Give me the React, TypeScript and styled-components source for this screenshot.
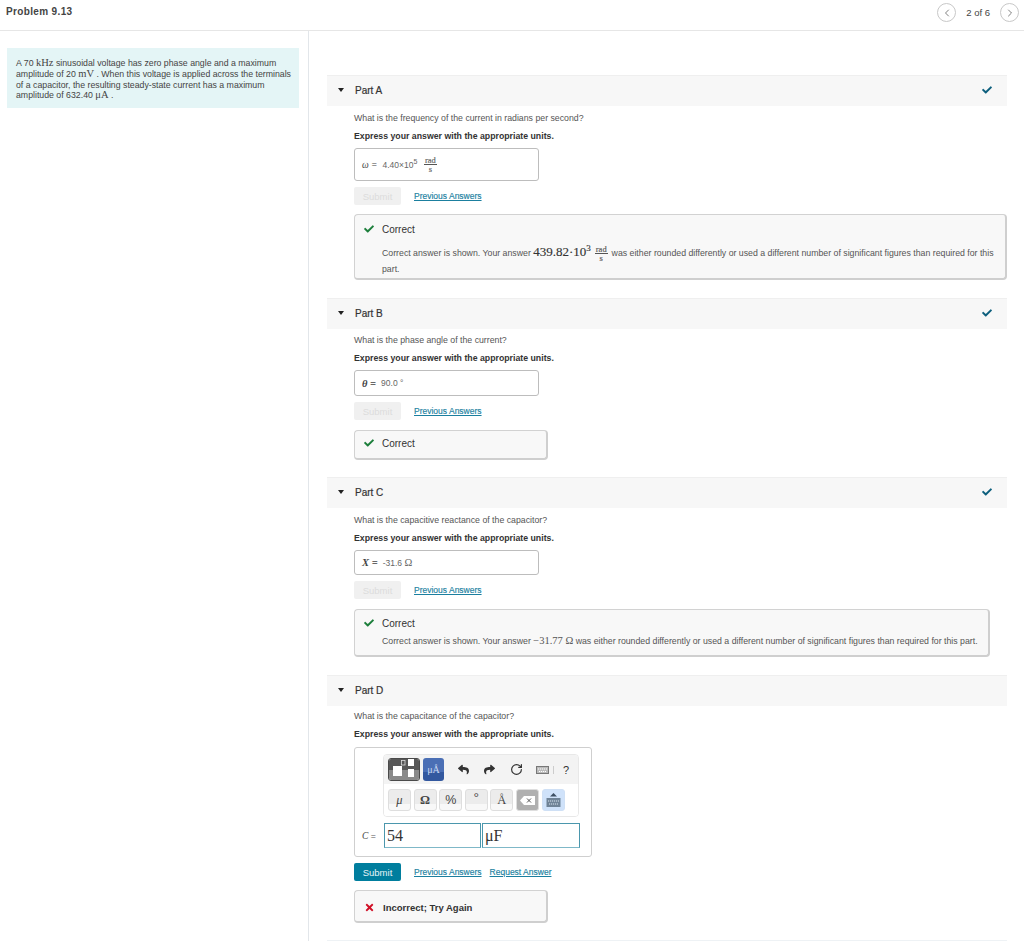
import React from 'react'
import styled, { createGlobalStyle } from 'styled-components'
import { FaCheck, FaTimes, FaReply, FaShare } from 'react-icons/fa'
import { ChevronLeft, ChevronRight, RotateCw } from 'lucide-react'

const Global = createGlobalStyle`
  html, body { margin: 0; padding: 0; background: #fff; }
  body { font-family: "Liberation Sans", Arial, sans-serif; font-size: 8.75px; color: #333; }
  * { box-sizing: border-box; }
`

const Page = styled.div`
  width: 1024px;
  height: 941px;
  overflow: hidden;
  display: flex;
  flex-direction: column;
`
const TopBar = styled.header`
  height: 31px;
  flex: none;
  display: flex;
  align-items: center;
  justify-content: space-between;
  padding: 0 5px 7px 6px;
  border-bottom: 1px solid #e6e6e6;
`
const Title = styled.h1`
  margin: 0;
  font-size: 10px;
  line-height: 12px;
  font-weight: bold;
  letter-spacing: 0.35px;
  color: #444;
`
const Pager = styled.div`
  display: flex;
  align-items: center;
  gap: 10px;
  font-size: 9.5px;
  color: #444;
  margin-top: 2px;
`
const CircleButton = styled.span`
  width: 19px;
  height: 19px;
  border-radius: 50%;
  border: 1px solid #c8c8c8;
  display: flex;
  align-items: center;
  justify-content: center;
  color: #555;
`
const Columns = styled.div`
  flex: 1;
  display: grid;
  grid-template-columns: 309px 1fr;
`
const Sidebar = styled.aside`
  border-right: 1px solid #e2e6ea;
  padding: 17px 9px 0 7px;
`
const InfoBox = styled.div`
  height: 60px;
  background: #e4f5f6;
  padding: 10px 6px 0 9px;
  font-size: 8.75px;
  line-height: 10.8px;
  color: #444;
`
const MathText = styled.span`
  font-family: "Liberation Serif", serif;
  font-size: 10.5px;
  line-height: 0;
`
const MathBig = styled(MathText)`
  font-size: 13px;
  color: #333;
  -webkit-text-stroke: 0.15px #333;
`
const Content = styled.main`
  position: relative;
  padding: 44px 18px 0 18px;
  &::after {
    content: '';
    position: absolute;
    right: 0;
    top: 26px;
    bottom: 0;
    width: 1px;
    background: #e3e9ee;
  }
`
const PartBlock = styled.section<{ $after: number }>`
  margin-bottom: ${p => p.$after}px;
`
const LastPart = styled.section`
  padding-bottom: 17px;
  border-bottom: 1px solid #eef2f5;
`
const PartHeader = styled.div`
  height: 31px;
  background: #f7f7f7;
  border-top: 1px solid #efefef;
  display: flex;
  align-items: center;
  padding: 0 15px 2px 11px;
  color: #333;
  font-size: 10px;
  -webkit-text-stroke: 0.2px #333;
`
const Caret = styled.span`
  width: 0;
  height: 0;
  border-left: 3px solid transparent;
  border-right: 3px solid transparent;
  border-top: 4px solid #222;
  margin-right: 11px;
`
const PartName = styled.span`
  flex: 1;
`
const PartBody = styled.div`
  padding-left: 27px;
`
const Question = styled.p<{ $top: number }>`
  margin: ${p => p.$top}px 0 0;
  line-height: 12px;
  color: #555;
`
const Instruction = styled.p`
  margin: 6px 0 0;
  line-height: 12px;
  font-weight: bold;
  color: #333;
`
const AnswerBox = styled.div<{ $h: number }>`
  width: 185px;
  height: ${p => p.$h}px;
  margin-top: 6px;
  border: 1px solid #bdbdbd;
  border-radius: 3px;
  display: flex;
  align-items: center;
  gap: 5px;
  padding-left: 7px;
  font-size: 8.5px;
  color: #666;
`
const Variable = styled.i<{ $strong?: boolean }>`
  font-family: "Liberation Serif", serif;
  font-size: ${p => (p.$strong ? 10.5 : 9.5)}px;
  font-weight: ${p => (p.$strong ? 'bold' : 'normal')};
  color: #444;
`
const Sup = styled.sup`
  font-size: 7px;
  line-height: 0;
`
const BigSup = styled.sup`
  font-size: 9px;
  line-height: 0;
`
const Fraction = styled.span`
  display: inline-flex;
  flex-direction: column;
  align-items: center;
  font-family: "Liberation Serif", serif;
  font-size: 8.5px;
  line-height: 8px;
  vertical-align: middle;
  margin: 0 1.5px;
  -webkit-text-stroke: 0.15px #555;
`
const FractionTop = styled.span`
  border-bottom: 1px solid #555;
  padding: 0 1px;
`
const ActionRow = styled.div`
  display: flex;
  align-items: center;
  gap: 13px;
  margin-top: 6px;
`
const SubmitButton = styled.span<{ $active?: boolean }>`
  width: 47px;
  height: 18px;
  border-radius: 2px;
  display: flex;
  align-items: center;
  justify-content: center;
  font-size: 9.5px;
  background: ${p => (p.$active ? '#007e9e' : '#f0f0f0')};
  color: ${p => (p.$active ? '#e8f4f7' : '#dcdcdc')};
`
const LinkRow = styled.span`
  display: flex;
  gap: 8px;
`
const TextLink = styled.a`
  font-size: 8.5px;
  color: #1b7f9f;
  text-decoration: underline;
  -webkit-text-stroke: 0.15px #1b7f9f;
`
const Feedback = styled.div<{ $w: number; $h: number; $top: number; $pad: number }>`
  width: ${p => p.$w}px;
  height: ${p => p.$h}px;
  margin-top: ${p => p.$top}px;
  padding: ${p => p.$pad}px 8px 0 9px;
  background: #f8f8f8;
  border: 1px solid #d2d2d2;
  border-bottom: 2px solid #cfcfcf;
  border-right: 2px solid #cfcfcf;
  border-radius: 4px;
`
const FeedbackTitle = styled.div`
  display: flex;
  align-items: center;
  gap: 8px;
  height: 12px;
  font-size: 10px;
  color: #333;
`
const WrongLabel = styled.b`
  font-size: 9.5px;
`
const FeedbackText = styled.p<{ $top: number }>`
  margin: ${p => p.$top}px 0 0 18px;
  font-size: 8.75px;
  line-height: 14px;
  color: #555;
`
const Editor = styled.div`
  width: 238px;
  height: 110px;
  margin-top: 7px;
  border: 1px solid #cfcfcf;
  border-radius: 3px;
  padding: 6px 0 0 7px;
`
const Toolbar = styled.div`
  width: 196px;
  height: 63px;
  margin-left: 21px;
  border: 1px solid #e8e8e8;
  border-radius: 4px;
  overflow: hidden;
`
const ToolRowTop = styled.div`
  height: 29px;
  display: flex;
  align-items: center;
  padding-left: 4px;
  background: #f3f3f3;
`
const ToolRowBottom = styled.div`
  height: 32px;
  display: flex;
  align-items: center;
  gap: 2.6px;
  padding-left: 4px;
  background: #fff;
`
const TemplateKey = styled.span`
  width: 32px;
  height: 23px;
  flex: none;
  border-radius: 3px;
  overflow: hidden;
  display: flex;
  border: 1px solid #4a4a4a;
`
const UnitsKey = styled.span`
  width: 21px;
  height: 23px;
  flex: none;
  margin-left: 3px;
  border-radius: 3px;
  background: linear-gradient(#4b6fb5 60%, #33589f 60%);
  color: #c9d8f2;
  font-family: "Liberation Serif", serif;
  font-size: 10px;
  display: flex;
  align-items: center;
  justify-content: center;
`
const IconSlot = styled.span<{ $w: number }>`
  width: ${p => p.$w}px;
  flex: none;
  display: flex;
  align-items: center;
  justify-content: center;
  color: #333;
  font-size: 11px;
`
const SymbolKey = styled.span<{ $kind?: 'dark' | 'blue'; $sans?: boolean; $raise?: boolean }>`
  width: 23px;
  height: 22px;
  border-radius: 3px;
  border: 1px solid ${p => (p.$kind === 'blue' ? '#cfe0f5' : '#dedede')};
  background: ${p =>
    p.$kind === 'dark'
      ? '#b0b0b0'
      : p.$kind === 'blue'
        ? '#cfe2fa'
        : 'linear-gradient(#ececec 72%, #f8f8f8 72%)'};
  display: flex;
  align-items: ${p => (p.$raise ? 'flex-start' : 'center')};
  justify-content: center;
  font-family: ${p => (p.$sans ? '"Liberation Sans", sans-serif' : '"Liberation Serif", serif')};
  font-size: 12.5px;
  color: #444;
`
const EquationRow = styled.div`
  display: flex;
  align-items: center;
  margin-top: 6px;
`
const EquationLabel = styled.span`
  width: 22px;
  color: #555;
`
const MathField = styled.span<{ $w: number }>`
  height: 25px;
  width: ${p => p.$w}px;
  margin-right: 1px;
  border: 1px solid #4b97ad;
  border-bottom-color: #7fb8c8;
  padding-left: 2px;
  font-family: "Liberation Serif", serif;
  font-size: 16px;
  line-height: 23px;
  color: #333;
`
const Green = styled.span`
  display: flex;
  color: #1d7f3c;
  font-size: 10px;
`
const Red = styled.span`
  display: flex;
  color: #d01027;
  font-size: 11px;
`
const HeaderCheck = styled.span`
  display: flex;
  color: #0d5f7d;
  font-size: 10px;
`
const Divider = styled.span`
  width: 1px;
  height: 8px;
  background: #ccc;
  margin-left: 4px;
`

const PartTop = ({ name, done = true }: { name: string; done?: boolean }) => (
  <PartHeader>
    <Caret />
    <PartName>{name}</PartName>
    {done && <HeaderCheck><FaCheck /></HeaderCheck>}
  </PartHeader>
)

const Actions = () => (
  <ActionRow>
    <SubmitButton>Submit</SubmitButton>
    <TextLink>Previous Answers</TextLink>
  </ActionRow>
)

const Correct = () => (
  <FeedbackTitle>
    <Green><FaCheck /></Green>
    Correct
  </FeedbackTitle>
)

const RadPerSec = () => (
  <Fraction><FractionTop>rad</FractionTop>s</Fraction>
)

const TemplateIcon = () => (
  <svg width="30" height="21" viewBox="0 0 30 21">
    <rect width="30" height="11" fill="#585858" />
    <rect y="11" width="30" height="10" fill="#8a8a8a" />
    <rect x="4" y="7" width="9" height="10" fill="#fff" />
    <rect x="12.5" y="1.5" width="3.5" height="4.5" fill="none" stroke="#ddd" strokeWidth="0.8" />
    <rect x="19" y="0" width="6" height="7" fill="#fff" />
    <rect x="19" y="10" width="6" height="8" fill="#fff" />
  </svg>
)

const KeyboardIcon = () => (
  <svg width="13" height="8" viewBox="0 0 13 8">
    <rect x="0.5" y="0.5" width="12" height="7" fill="#bbb" stroke="#777" />
    <path d="M2 3h9M3 5.5h7" stroke="#fff" strokeWidth="1" strokeDasharray="1.2 0.8" />
  </svg>
)

const BackspaceIcon = () => (
  <svg width="15" height="9" viewBox="0 0 15 9">
    <path d="M4 0h11v9H4L0 4.5z" fill="#fff" />
    <path d="M7 2.5l4 4M11 2.5l-4 4" stroke="#555" strokeWidth="1" />
  </svg>
)

const KeyboardToggleIcon = () => (
  <svg width="15" height="15" viewBox="0 0 15 15">
    <path d="M7.5 0l3.5 3.5H4z" fill="#3d4f63" />
    <rect x="0.5" y="5" width="14" height="9" fill="#6f8397" />
    <path d="M2 8h11M3 11h9" stroke="#dbe6f2" strokeWidth="1" strokeDasharray="1.2 0.8" />
  </svg>
)

export default function App() {
  return (
    <Page>
      <Global />
      <TopBar>
        <Title>Problem 9.13</Title>
        <Pager>
          <CircleButton><ChevronLeft size={12} strokeWidth={1.5} /></CircleButton>
          2 of 6
          <CircleButton><ChevronRight size={12} strokeWidth={1.5} /></CircleButton>
        </Pager>
      </TopBar>
      <Columns>
        <Sidebar>
          <InfoBox>
            A 70 <MathText>kHz</MathText> sinusoidal voltage has zero phase angle and a maximum
            amplitude of 20 <MathText>mV</MathText> . When this voltage is applied across the terminals
            of a capacitor, the resulting steady-state current has a maximum
            amplitude of 632.40 <MathText>μA</MathText> .
          </InfoBox>
        </Sidebar>
        <Content>
          <PartBlock $after={18}>
            <PartTop name="Part A" />
            <PartBody>
              <Question $top={6}>What is the frequency of the current in radians per second?</Question>
              <Instruction>Express your answer with the appropriate units.</Instruction>
              <AnswerBox $h={33}>
                <Variable>ω =</Variable>
                <span>4.40×10<Sup>5</Sup></span>
                <RadPerSec />
              </AnswerBox>
              <Actions />
              <Feedback $w={653} $h={66} $top={9} $pad={8}>
                <Correct />
                <FeedbackText $top={10}>
                  Correct answer is shown. Your answer <MathBig>439.82·10<BigSup>3</BigSup></MathBig>{' '}
                  <RadPerSec /> was either rounded differently or used a
                  different number of significant figures than required for this part.
                </FeedbackText>
              </Feedback>
            </PartBody>
          </PartBlock>
          <PartBlock $after={17}>
            <PartTop name="Part B" />
            <PartBody>
              <Question $top={5}>What is the phase angle of the current?</Question>
              <Instruction>Express your answer with the appropriate units.</Instruction>
              <AnswerBox $h={26}>
                <Variable $strong>θ =</Variable> 90.0 °
              </AnswerBox>
              <Actions />
              <Feedback $w={194} $h={30} $top={10} $pad={6}>
                <Correct />
              </Feedback>
            </PartBody>
          </PartBlock>
          <PartBlock $after={18}>
            <PartTop name="Part C" />
            <PartBody>
              <Question $top={6}>What is the capacitive reactance of the capacitor?</Question>
              <Instruction>Express your answer with the appropriate units.</Instruction>
              <AnswerBox $h={25}>
                <Variable $strong>X =</Variable> <span>-31.6 <MathText>Ω</MathText></span>
              </AnswerBox>
              <Actions />
              <Feedback $w={636} $h={48} $top={10} $pad={7}>
                <Correct />
                <FeedbackText $top={5}>
                  Correct answer is shown. Your answer <MathText>−31.77 Ω</MathText> was either rounded differently or used a
                  different number of significant figures than required for this part.
                </FeedbackText>
              </Feedback>
            </PartBody>
          </PartBlock>
          <LastPart>
            <PartTop name="Part D" done={false} />
            <PartBody>
              <Question $top={4}>What is the capacitance of the capacitor?</Question>
              <Instruction>Express your answer with the appropriate units.</Instruction>
              <Editor>
                <Toolbar>
                  <ToolRowTop>
                    <TemplateKey><TemplateIcon /></TemplateKey>
                    <UnitsKey>μÅ</UnitsKey>
                    <IconSlot $w={38}><FaReply /></IconSlot>
                    <IconSlot $w={14}><FaShare /></IconSlot>
                    <IconSlot $w={40}><RotateCw size={13} strokeWidth={2.2} /></IconSlot>
                    <IconSlot $w={18}><KeyboardIcon /><Divider /></IconSlot>
                    <IconSlot $w={24}>?</IconSlot>
                  </ToolRowTop>
                  <ToolRowBottom>
                    <SymbolKey><i>μ</i></SymbolKey>
                    <SymbolKey><b>Ω</b></SymbolKey>
                    <SymbolKey $sans>%</SymbolKey>
                    <SymbolKey $raise>°</SymbolKey>
                    <SymbolKey>Å</SymbolKey>
                    <SymbolKey $kind="dark"><BackspaceIcon /></SymbolKey>
                    <SymbolKey $kind="blue"><KeyboardToggleIcon /></SymbolKey>
                  </ToolRowBottom>
                </Toolbar>
                <EquationRow>
                  <EquationLabel><Variable>C</Variable> =</EquationLabel>
                  <MathField $w={97}>54</MathField>
                  <MathField $w={98}>μF</MathField>
                </EquationRow>
              </Editor>
              <ActionRow>
                <SubmitButton $active>Submit</SubmitButton>
                <LinkRow>
                  <TextLink>Previous Answers</TextLink>
                  <TextLink>Request Answer</TextLink>
                </LinkRow>
              </ActionRow>
              <Feedback $w={194} $h={33} $top={9} $pad={10}>
                <FeedbackTitle>
                  <Red><FaTimes /></Red>
                  <WrongLabel>Incorrect; Try Again</WrongLabel>
                </FeedbackTitle>
              </Feedback>
            </PartBody>
          </LastPart>
        </Content>
      </Columns>
    </Page>
  )
}
